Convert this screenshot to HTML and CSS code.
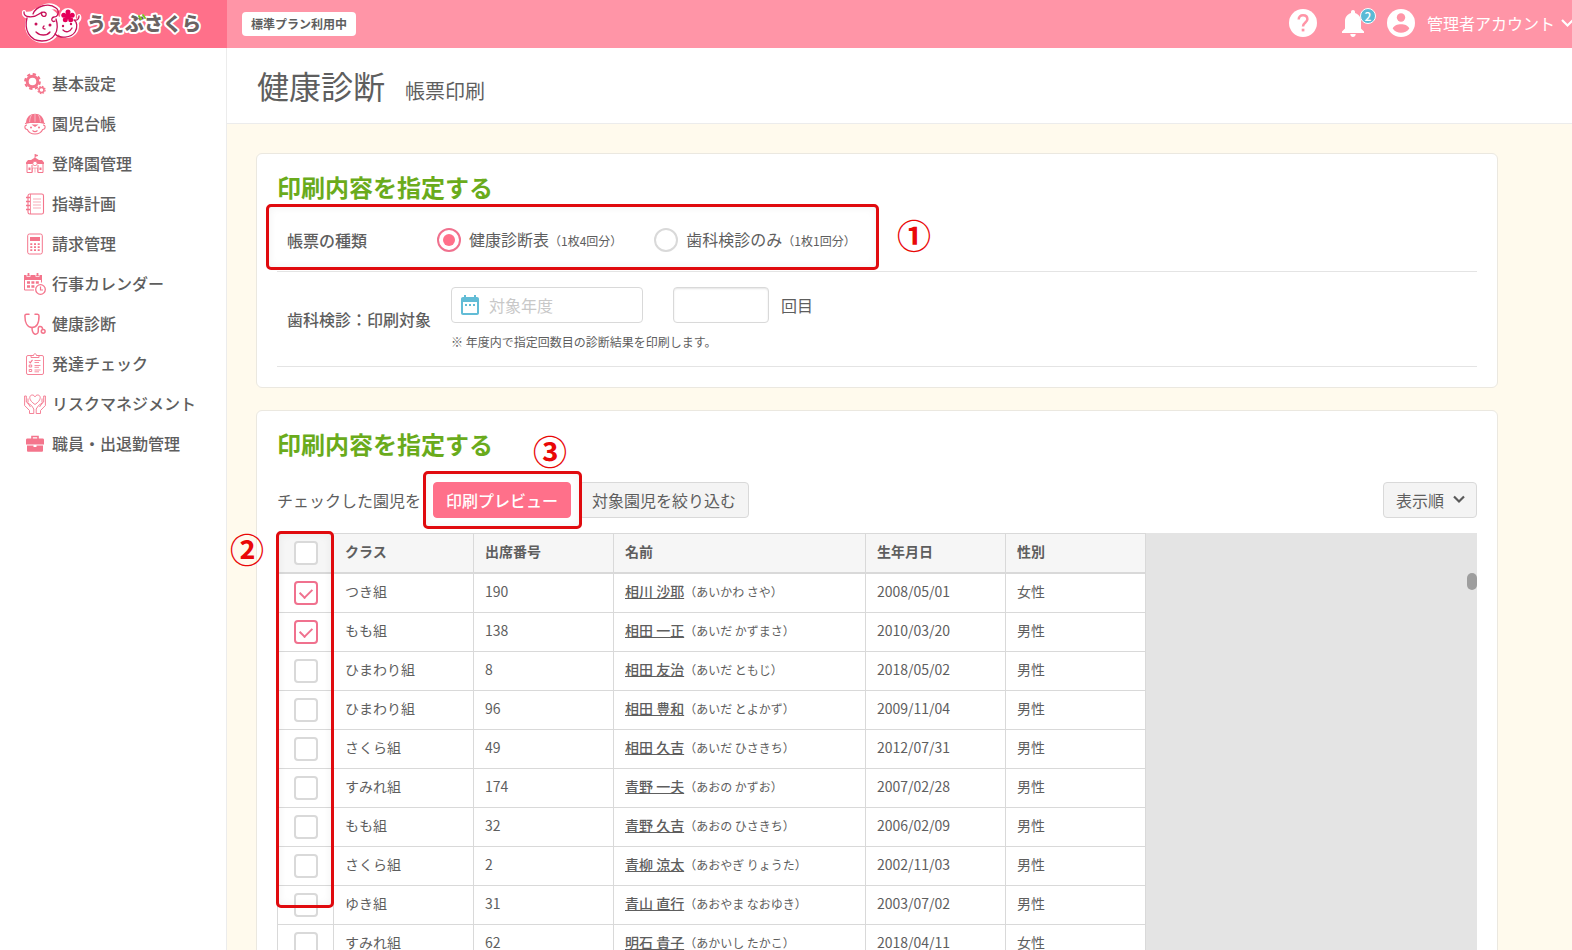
FILE: index.html
```html
<!DOCTYPE html>
<html lang="ja">
<head>
<meta charset="utf-8">
<title>健康診断 帳票印刷</title>
<link rel="stylesheet" href="styles.css">
</head>
<body>
<div class="app">
  <header class="topbar">
    <a class="brand" href="#" aria-label="うぇぶさくら">
      <svg width="186" height="46" viewBox="0 0 186 46">
        <g fill="#fff" stroke="#fff" stroke-width="4" stroke-linejoin="round" stroke-linecap="round">
          <circle cx="21" cy="24" r="16"/><circle cx="45" cy="25" r="10"/><circle cx="46" cy="15" r="6"/><path d="M2 11 C1 16 8 18 14 13 C18 5 28 1 36 8 M54 21 C57 20 58 17 57 15"/>
        </g>
        <g fill="none" stroke="#c8125a" stroke-width="1.300" stroke-linecap="round" stroke-linejoin="round">
          <path d="M5 17 C2 28 7 40 20 40 C32 40 38 30 34 18"/>
          <path d="M2 11 C1 17 12 17 17 13 C21 10 25 11 24 14 C23 17 18 15 20 11 M11 13 C14 5 27 1 34 7 C38 10 36 16 32 16 C28 17 30 22 33 20"/>
          <path d="M33 33 C38 38 49 37 53 31 C56 26 55 21 52 19 C56 20 57 17 57 15"/>
          <path d="M14 31 C18 35 25 35 28 31 M41 29 C44 32 48 31 50 27 M22 25 C20 27 21 28 23 28"/>
        </g>
        <g fill="#c8125a"><circle cx="14" cy="23" r="1.500"/><circle cx="28" cy="24" r="1.500"/><circle cx="41" cy="25" r="1.200"/><circle cx="49" cy="23" r="1.200"/></g>
        <g fill="#e5005a"><circle cx="46" cy="11" r="2.500"/><circle cx="41.800" cy="14.200" r="2.500"/><circle cx="50.200" cy="14.200" r="2.500"/><circle cx="43.300" cy="18.700" r="2.500"/><circle cx="48.700" cy="18.700" r="2.500"/><circle cx="46" cy="15.500" r="3"/></g>
        <text class="brand-name" x="65" y="30">うぇぶさくら</text>
        <path d="M117 15 l2 3 M121 14 l2 3" fill="none" stroke="#7fc31c" stroke-width="2" stroke-linecap="round"/>
      </svg>
    </a>
    <div class="topbar-main">
      <span class="plan">標準プラン利用中</span>
      <nav class="tools" aria-label="アカウント">
        <button class="tool" type="button" aria-label="ヘルプ">
          <svg width="28" height="28" viewBox="0 0 28 28"><circle cx="14" cy="14" r="14" fill="#fff"/><path d="M9.700 10.500 C9.700 7.800 11.500 6.300 14 6.300 C16.600 6.300 18.400 7.900 18.400 10.200 C18.400 13.300 14 13.700 14 17.400" fill="none" stroke="#ff95a7" stroke-width="2.500"/><rect x="12.700" y="19.700" width="2.700" height="2.700" fill="#ff95a7"/></svg>
        </button>
        <button class="tool bell" type="button" aria-label="お知らせ">
          <svg width="22" height="28" viewBox="0 0 22 28"><path d="M11 1 C9.800 1 9 1.900 9 3 V4 C5.500 5 3 8.200 3 12 V19.500 L0 22.500 V24 H22 V22.500 L19 19.500 V12 C19 8.200 16.500 5 13 4 V3 C13 1.900 12.200 1 11 1Z M8.300 25 H13.700 C13.700 29 8.300 29 8.300 25Z" fill="#fff"/></svg>
          <span class="count">2</span>
        </button>
        <button class="tool account" type="button">
          <svg width="28" height="28" viewBox="0 0 28 28"><circle cx="14" cy="14" r="14" fill="#fff"/><circle cx="14" cy="8.500" r="4.200" fill="#ff95a7"/><path d="M5.700 19.500 C7.500 13.700 20.500 13.700 22.300 19.500 C18.500 25.300 9.500 25.300 5.700 19.500Z" fill="#ff95a7"/></svg>
          <span class="account-name">管理者アカウント</span>
          <svg width="13" height="12" viewBox="0 0 13 12"><path d="M3 3 l5.500 5.500 l5.500 -5.500" fill="none" stroke="#fff" stroke-width="2.200"/></svg>
        </button>
      </nav>
    </div>
  </header>

  <nav class="sidebar" aria-label="メニュー">
    <a class="item" href="#"><svg class="ico" viewBox="0 0 22 22"><circle cx="8.500" cy="8.500" r="5.300" fill="none" stroke="#f4758c" stroke-width="3"/><circle cx="8.500" cy="8.500" r="7.400" fill="none" stroke="#f4758c" stroke-width="2" stroke-dasharray="3.300 2.510"/><circle cx="17.500" cy="17" r="2.500" fill="none" stroke="#f4758c" stroke-width="1.500"/><circle cx="17.500" cy="17" r="3.600" fill="none" stroke="#f4758c" stroke-width="1.200" stroke-dasharray="1.600 1.230"/></svg><span>基本設定</span></a>
    <a class="item" href="#"><svg class="ico" viewBox="0 0 22 22"><path d="M2 10 C2 -2.500 20 -2.500 20 10Z" fill="#f4758c"/><path d="M11 1 V10 M7.500 2 C6 4.500 5.600 7 5.600 10 M14.500 2 C16 4.500 16.400 7 16.400 10" fill="none" stroke="#fff" stroke-width=".5"/><path d="M1 10.500 C7 9 15 9 21 10.500 M3 12 C0 12 .3 16.500 3.300 16.500 C6 22.500 16 22.500 18.700 16.500 C21.700 16.500 22 12 19 12 M8.500 17.500 C10 18.800 12 18.800 13.500 17.500" fill="none" stroke="#f4758c" stroke-width="1.100"/><path d="M7.500 11.500 H14.500 L11 14Z" fill="#f4758c"/><circle cx="7" cy="14.500" r="1" fill="#f4758c"/><circle cx="15" cy="14.500" r="1" fill="#f4758c"/></svg><span>園児台帳</span></a>
    <a class="item" href="#"><svg class="ico" viewBox="0 0 22 22"><path d="M11 1 V6 M11 1.500 L14 2.500 L11 3.500" fill="#f4758c" stroke="#f4758c" stroke-width=".8"/><path d="M2 11 V9.500 L4 7 H7 L11 4.500 L15 7 H18 L20 9.500 V11Z" fill="#f4758c"/><path d="M3 11 V19.500 H8 V12 M19 11 V19.500 H14 V12" fill="none" stroke="#f4758c" stroke-width="1"/><path d="M8.500 19.500 V15 H13.500 V19.500 M11 15 V19.500" fill="none" stroke="#f4758c" stroke-width=".6"/><circle cx="11" cy="10.500" r="2.200" fill="#fff" stroke="#f4758c" stroke-width=".8"/><path d="M4.500 14.500 h2 v2.500 h-2z M15.500 14.500 h2 v2.500 h-2z" fill="#f4758c"/></svg><span>登降園管理</span></a>
    <a class="item" href="#"><svg class="ico" viewBox="0 0 22 22"><g fill="none" stroke="#f4758c"><rect x="4" y="1" width="15.500" height="20" rx="1.800" stroke-width="1.100"/><path d="M6.500 1 V21" stroke-width=".8"/><path d="M2 4.500 H6 M2 8.500 H6 M2 12.500 H6 M2 16.500 H6" stroke-width="1.600"/><path d="M9 6 H17 M9 9 H17 M9 12 H17 M9 15 H17" stroke-width=".6"/></g></svg><span>指導計画</span></a>
    <a class="item" href="#"><svg class="ico" viewBox="0 0 22 22"><rect x="3.700" y="1" width="14.600" height="20" rx="1.800" fill="none" stroke="#f4758c" stroke-width="1"/><path d="M6 4 H16 V8 H6Z" fill="#f4758c"/><path d="M7.300 10.200 V19 M11 10.200 V19 M14.700 10.200 V19" stroke="#f4758c" stroke-width="2" stroke-dasharray="1.800 1.200"/></svg><span>請求管理</span></a>
    <a class="item" href="#"><svg class="ico" viewBox="0 0 22 22"><path d="M0 2 H18 V7 H0Z M3.500 0 H5.500 V4 H3.500Z M12.500 0 H14.500 V4 H12.500Z" fill="#f4758c"/><path d="M2.800 0 V3.500 H6.200 V0 M11.800 0 V3.500 H15.200 V0" fill="none" stroke="#fff" stroke-width=".7"/><path d="M.5 6 V17 H10 M17.500 6 V9.500" fill="none" stroke="#f4758c"/><path d="M3 9.500 H15 M3 13.500 H11" stroke="#f4758c" stroke-width="2.600" stroke-dasharray="3 1.400"/><circle cx="16.500" cy="16.500" r="4.800" fill="#fff" stroke="#f4758c" stroke-width="1.300"/><path d="M16.500 13.500 V17 H19" fill="none" stroke="#f4758c" stroke-width="1.200"/></svg><span>行事カレンダー</span></a>
    <a class="item" href="#"><svg class="ico" viewBox="0 0 22 22"><g fill="none" stroke="#f4758c" stroke-width="1.500" stroke-linecap="round"><path d="M5 1.200 H2.500 C1.300 1.200 .9 2 .9 3 C.9 9 3 14.500 8 14.500 C13 14.500 15 9 15 3 C15 2 14.600 1.200 13.500 1.200 H11"/><path d="M8 14.500 C8 22.500 13 22 14 19.500 C15 16.500 13 14.500 15.500 13.500 C18 13 18.500 15 18.500 16"/><circle cx="19.200" cy="18.300" r="1.900"/></g></svg><span>健康診断</span></a>
    <a class="item" href="#"><svg class="ico" viewBox="0 0 22 22"><g fill="none" stroke="#f4758c"><rect x="2.500" y="2.500" width="17" height="19" rx="1.500" stroke-width=".9"/><path d="M7 4.500 V2.500 H9.500 C9.500 .2 12.500 .2 12.500 2.500 H15 V4.500Z" stroke-width=".9" fill="#fff"/><path d="M5 8.500 l1.200 1.300 l2.300 -3" stroke-width="1.100"/><path d="M5.200 12 h2.500 v2 h-2.500z M5.200 16.500 h2.500 v2 h-2.500z" stroke-width=".9"/><path d="M10.500 7.500 H16.500 M10.500 9.500 H15 M10.500 12.500 H16.500 M10.500 14.300 H15 M10.500 17 H16.500 M10.500 18.800 H15" stroke-width=".8"/></g></svg><span>発達チェック</span></a>
    <a class="item" href="#"><svg class="ico" viewBox="0 0 22 22"><g fill="none" stroke="#f4758c" stroke-width=".9" stroke-linejoin="round"><path d="M11 11.500 C3.500 6.500 5.500 2 8.200 2 C9.600 2 10.600 2.800 11 4 C11.400 2.800 12.400 2 13.800 2 C16.500 2 18.500 6.500 11 11.500Z"/><path d="M.6 3 H2.300 V9 L7.500 12.500 L9.800 16 V20.500 H5.500 V17.500 L.6 12.500Z M3.500 9.800 L6.500 14 M4 5.500 V9.500"/><path d="M21.400 3 H19.700 V9 L14.500 12.500 L12.200 16 V20.500 H16.500 V17.500 L21.400 12.500Z M18.500 9.800 L15.500 14 M18 5.500 V9.500"/></g></svg><span>リスクマネジメント</span></a>
    <a class="item" href="#"><svg class="ico" viewBox="0 0 22 22"><path d="M8 6 V3.500 H14 V6" fill="none" stroke="#f4758c" stroke-width="1.600"/><path d="M3.500 5.500 H18.500 C19.500 5.500 20 6 20 7 V11.500 H2 V7 C2 6 2.500 5.500 3.500 5.500Z M3 12.500 H9.500 V14 H12.500 V12.500 H19 V17.500 C19 18.300 18.500 18.800 17.700 18.800 H4.300 C3.500 18.800 3 18.300 3 17.500Z" fill="#f4758c"/></svg><span>職員・出退勤管理</span></a>
  </nav>

  <main class="main">
    <div class="page-head">
      <h1>健康診断</h1>
      <p>帳票印刷</p>
    </div>
    <div class="content">
      <section class="card">
        <h2>印刷内容を指定する</h2>
        <div class="field kind" role="radiogroup" aria-labelledby="kind-label">
          <span class="field-label" id="kind-label">帳票の種類</span>
          <div class="choices">
            <label class="choice"><input type="radio" name="kind" checked><span>健康診断表<small>（1枚4回分）</small></span></label>
            <label class="choice"><input type="radio" name="kind"><span>歯科検診のみ<small>（1枚1回分）</small></span></label>
          </div>
          <span class="frame frame-kind"></span>
          <span class="mark mark-kind">①</span>
        </div>
        <div class="field target">
          <label class="field-label" for="year">歯科検診：印刷対象</label>
          <div class="target-body">
            <div class="target-inputs">
              <span class="date">
                <svg width="18" height="20" viewBox="0 0 18 20"><path d="M2 2 H3 V0 H5 V2 H13 V0 H15 V2 H16 C17.200 2 18 2.800 18 4 V18 C18 19.200 17.200 20 16 20 H2 C.8 20 0 19.200 0 18 V4 C0 2.800 .8 2 2 2Z M2 7 V18 H16 V7Z" fill="#62bcd6" fill-rule="evenodd"/><path d="M4 9 h2 v2 h-2z M8 9 h2 v2 h-2z M12 9 h2 v2 h-2z" fill="#62bcd6"/></svg>
                <input id="year" type="text" placeholder="対象年度">
              </span>
              <input class="times" id="times" type="text">
              <label for="times">回目</label>
            </div>
            <p class="note">※ 年度内で指定回数目の診断結果を印刷します。</p>
          </div>
        </div>
      </section>

      <section class="card">
        <h2>印刷内容を指定する</h2>
        <div class="toolbar">
          <span>チェックした園児を</span>
          <span class="print">
            <button class="btn primary" type="button">印刷プレビュー</button>
            <span class="frame frame-print"></span>
            <span class="mark mark-print">③</span>
          </span>
          <button class="btn filter" type="button">対象園児を絞り込む</button>
          <button class="btn order" type="button">表示順<svg width="14" height="10" viewBox="0 0 14 10"><path d="M2 1.500 l5 5 l5 -5" fill="none" stroke="#5a5a5a" stroke-width="2.200"/></svg></button>
        </div>
        <div class="grid">
          <table>
            <colgroup><col class="c-check"><col class="c-std"><col class="c-std"><col class="c-name"><col class="c-std"><col class="c-std"></colgroup>
            <thead>
              <tr><th><input type="checkbox" aria-label="すべて選択"></th><th>クラス</th><th>出席番号</th><th>名前</th><th>生年月日</th><th>性別</th></tr>
            </thead>
            <tbody>
              <tr><td><input type="checkbox" aria-label="選択" checked></td><td>つき組</td><td>190</td><td><a href="#">相川 沙耶</a><small>（あいかわ さや）</small></td><td>2008/05/01</td><td>女性</td></tr>
              <tr><td><input type="checkbox" aria-label="選択" checked></td><td>もも組</td><td>138</td><td><a href="#">相田 一正</a><small>（あいだ かずまさ）</small></td><td>2010/03/20</td><td>男性</td></tr>
              <tr><td><input type="checkbox" aria-label="選択"></td><td>ひまわり組</td><td>8</td><td><a href="#">相田 友治</a><small>（あいだ ともじ）</small></td><td>2018/05/02</td><td>男性</td></tr>
              <tr><td><input type="checkbox" aria-label="選択"></td><td>ひまわり組</td><td>96</td><td><a href="#">相田 豊和</a><small>（あいだ とよかず）</small></td><td>2009/11/04</td><td>男性</td></tr>
              <tr><td><input type="checkbox" aria-label="選択"></td><td>さくら組</td><td>49</td><td><a href="#">相田 久吉</a><small>（あいだ ひさきち）</small></td><td>2012/07/31</td><td>男性</td></tr>
              <tr><td><input type="checkbox" aria-label="選択"></td><td>すみれ組</td><td>174</td><td><a href="#">青野 一夫</a><small>（あおの かずお）</small></td><td>2007/02/28</td><td>男性</td></tr>
              <tr><td><input type="checkbox" aria-label="選択"></td><td>もも組</td><td>32</td><td><a href="#">青野 久吉</a><small>（あおの ひさきち）</small></td><td>2006/02/09</td><td>男性</td></tr>
              <tr><td><input type="checkbox" aria-label="選択"></td><td>さくら組</td><td>2</td><td><a href="#">青柳 涼太</a><small>（あおやぎ りょうた）</small></td><td>2002/11/03</td><td>男性</td></tr>
              <tr><td><input type="checkbox" aria-label="選択"></td><td>ゆき組</td><td>31</td><td><a href="#">青山 直行</a><small>（あおやま なおゆき）</small></td><td>2003/07/02</td><td>男性</td></tr>
              <tr><td><input type="checkbox" aria-label="選択"></td><td>すみれ組</td><td>62</td><td><a href="#">明石 貴子</a><small>（あかいし たかこ）</small></td><td>2018/04/11</td><td>女性</td></tr>
            </tbody>
          </table>
          <span class="thumb"></span>
          <span class="frame frame-check"></span>
          <span class="mark mark-check">②</span>
        </div>
      </section>
    </div>
  </main>
</div>
</body>
</html>
```
FILE: styles.css
```css
* { box-sizing: border-box; }

body {
  margin: 0;
  font: 16px/24px "Noto Sans CJK JP", "Noto Sans", sans-serif;
  color: #5e5e5e;
  background: #fffaed;
}

h1, h2, p { margin: 0; }
a { color: inherit; }
small { font-size: 12px; }
button, input { font: inherit; color: inherit; }
button { cursor: pointer; }

.app {
  display: grid;
  grid-template: 48px minmax(0, 1fr) / 227px minmax(0, 1fr);
  height: 100vh;
  overflow: hidden;
}

/* header */
.topbar {
  grid-column: 1 / -1;
  display: grid;
  grid-template-columns: subgrid;
  background: #ff95a7;
}
.brand {
  display: flex;
  align-items: center;
  padding-left: 22px;
  background: #ff708a;
}
.brand-name {
  font-size: 19px;
  font-weight: 900;
  fill: #6b6362;
  stroke: #fff;
  stroke-width: 4px;
  stroke-linejoin: round;
  paint-order: stroke;
}
.topbar-main {
  display: flex;
  align-items: center;
  justify-content: space-between;
  padding-left: 15px;
}
.plan {
  padding: 0 9px;
  border-radius: 4px;
  background: #fff;
  font-size: 12px;
  font-weight: 700;
}
.tools { display: flex; align-items: center; padding-bottom: 2px; }
.tool {
  display: flex;
  align-items: center;
  padding: 0;
  border: 0;
  background: none;
  color: #fff;
}
.bell { position: relative; margin: 0 23px 0 25px; }
.count {
  position: absolute;
  top: -1px;
  left: 18px;
  width: 16px;
  height: 16px;
  border: 1px solid #fff;
  border-radius: 8px;
  background: #5bbad5;
  font-size: 12px;
  font-weight: 500;
  line-height: 14px;
  text-align: center;
}
.account-name { margin: 0 4px 0 12px; }

/* side menu */
.sidebar {
  padding-top: 16px;
  border-right: 1px solid #ececec;
  background: #fff;
}
.item {
  display: flex;
  align-items: center;
  gap: 6px;
  height: 40px;
  padding-left: 24px;
  font-weight: 500;
  text-decoration: none;
}
.item span { padding-bottom: 2px; }
.ico { width: 22px; height: 22px; }

/* page */
.main { overflow-y: auto; scrollbar-width: none; }
.page-head {
  display: flex;
  align-items: baseline;
  gap: 20px;
  height: 76px;
  padding: 13px 30px;
  border-bottom: 1px solid #ececec;
  background: #fff;
}
h1 { font-size: 32px; font-weight: 400; line-height: 48px; }
.page-head p { font-size: 20px; }
.content {
  display: flex;
  flex-direction: column;
  gap: 22px;
  padding: 29px 74px 30px 29px;
}
.card {
  padding: 19px 20px 20px;
  border: 1px solid #ebe8e0;
  border-radius: 6px;
  background: #fff;
}
h2 { color: #6aab1c; font-size: 24px; font-weight: 700; line-height: 28px; }

.field {
  position: relative;
  display: grid;
  grid-template-columns: 150px minmax(0, 1fr);
  align-items: center;
  padding-left: 10px;
  border-bottom: 1px solid #e4e4e4;
}
.field-label { font-weight: 500; white-space: nowrap; }
.kind { height: 71px; padding-top: 8px; }
.target { height: 95px; }
.choices { display: flex; gap: 32px; }
.choice { display: flex; align-items: center; gap: 8px; }
.choice span { white-space: nowrap; }

input[type="radio"], input[type="checkbox"] {
  appearance: none;
  display: grid;
  place-items: center;
  flex: none;
  width: 24px;
  height: 24px;
  margin: 0;
  border: 2px solid #d9d9d9;
  background: #fff;
}
input[type="radio"] { border-radius: 50%; }
input[type="checkbox"] { border-radius: 4px; }
input[type="radio"]:checked, input[type="checkbox"]:checked { border-color: #f0718e; }
input[type="radio"]:checked::before {
  content: "";
  width: 12px;
  height: 12px;
  border-radius: 50%;
  background: #ff708a;
}
input[type="checkbox"]:checked::before {
  content: "";
  width: 10px;
  height: 6px;
  border: solid #f0718e;
  border-width: 0 0 2px 2px;
  transform: translateY(-1px) rotate(-45deg);
}

.target-body { padding-left: 14px; }
.target-inputs { display: flex; align-items: center; }
.date, .times {
  height: 36px;
  border: 1px solid #d9d9d9;
  border-radius: 4px;
  background: #fff;
}
.date { display: flex; align-items: center; gap: 10px; width: 192px; padding: 0 9px; }
.date svg { flex: none; }
.date input { width: 100%; min-width: 0; padding: 0; border: 0; outline: 0; }
.date input::placeholder { color: #c8c8c8; }
.times { width: 96px; margin: 0 12px 0 30px; box-shadow: inset 0 1px 2px #e4e4e4; }
.note { padding-top: 9px; font-size: 12px; line-height: 20px; }

.toolbar { display: flex; align-items: center; margin: 24px 0 15px; }
.print { position: relative; margin: 0 8px 0 12px; }
.btn {
  display: flex;
  align-items: center;
  height: 36px;
  padding: 0 12px;
  border: 1px solid #d9d9d9;
  border-radius: 4px;
  background: #f4f4f4;
  white-space: nowrap;
}
.primary { border-color: #ff708a; background: #ff708a; color: #fff; font-weight: 500; }
.order { gap: 8px; margin-left: auto; padding-right: 10px; }

/* child list */
.grid { position: relative; background: #e4e4e4; }
table {
  width: 869px;
  table-layout: fixed;
  border-left: 1px solid #d9d9d9;
  border-spacing: 0;
  background: #fff;
  font-size: 14px;
  line-height: 20px;
}
.c-check { width: 56px; }
.c-std { width: 140px; }
.c-name { width: 252px; }
th, td {
  height: 39px;
  padding: 0 11px 4px;
  border-right: 1px solid #d9d9d9;
  border-bottom: 1px solid #d9d9d9;
  text-align: left;
  white-space: nowrap;
}
th {
  height: 41px;
  border-top: 1px solid #d9d9d9;
  border-bottom-width: 2px;
  background: #f6f6f6;
  font-weight: 700;
}
th:first-child, td:first-child { padding: 0 16px; }
td a { font-weight: 500; }
.thumb {
  position: absolute;
  top: 40px;
  right: 0;
  width: 10px;
  height: 17px;
  border-radius: 5px;
  background: #9e9e9e;
}

/* step callouts */
.frame {
  position: absolute;
  border: 3px solid #e00a0e;
  border-radius: 5px;
  box-shadow: inset 0 0 8px rgba(0, 0, 0, .06);
  pointer-events: none;
}
.mark {
  position: absolute;
  color: #e90808;
  font-size: 34px;
  font-weight: 700;
  line-height: 34px;
}
.frame-kind { top: 3px; left: -11px; width: 613px; height: 66px; }
.mark-kind { top: 17px; left: 620px; }
.frame-print { top: -11px; left: -10px; width: 159px; height: 58px; }
.mark-print { top: -48px; left: 100px; }
.frame-check { top: -2px; left: -1px; width: 58px; height: 377px; }
.mark-check { top: -1px; left: -47px; }
```
